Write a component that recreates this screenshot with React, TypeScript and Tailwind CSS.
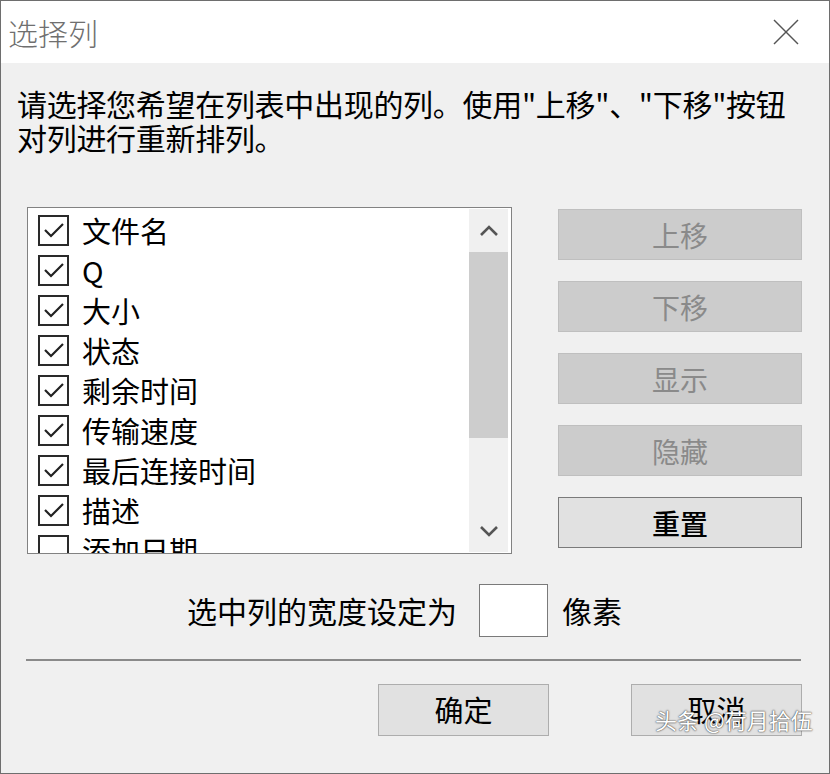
import React from 'react';

const items = [
  { label: '文件名', checked: true },
  { label: 'Q', checked: true },
  { label: '大小', checked: true },
  { label: '状态', checked: true },
  { label: '剩余时间', checked: true },
  { label: '传输速度', checked: true },
  { label: '最后连接时间', checked: true },
  { label: '描述', checked: true },
  { label: '添加日期', checked: false },
];

const sideButtons = [
  { label: '上移', disabled: true },
  { label: '下移', disabled: true },
  { label: '显示', disabled: true },
  { label: '隐藏', disabled: true },
  { label: '重置', disabled: false },
];

function CheckBox({ checked }: { checked: boolean }) {
  return (
    <div className="w-[31px] h-[31px] border-2 border-[#2a2a2a] bg-white flex items-center justify-center shrink-0">
      {checked && (
        <svg width="22" height="18" viewBox="0 0 22 18">
          <polyline points="2,9 8,15 20,3" fill="none" stroke="#222" strokeWidth="2.2" />
        </svg>
      )}
    </div>
  );
}

function Chevron({ up }: { up: boolean }) {
  return (
    <svg width="20" height="12" viewBox="0 0 20 12">
      <polyline
        points={up ? '2,10 10,2 18,10' : '2,2 10,10 18,2'}
        fill="none"
        stroke="#555"
        strokeWidth="2.6"
      />
    </svg>
  );
}

export default function App() {
  return (
    <div className="w-[830px] h-[774px] flex flex-col border border-[#6e6e6e] overflow-hidden font-['Noto_Sans_CJK_SC','Noto_Sans',sans-serif]">
      {/* title bar */}
      <div className="h-[62px] bg-white flex items-center justify-between pl-[7px] pr-[30px] shrink-0">
        <span className="text-[30px] font-light text-[#6f6f6f] leading-none">选择列</span>
        <svg width="26" height="26" viewBox="0 0 26 26">
          <line x1="1" y1="1" x2="25" y2="25" stroke="#555" strokeWidth="1.4" />
          <line x1="25" y1="1" x2="1" y2="25" stroke="#555" strokeWidth="1.4" />
        </svg>
      </div>

      <div className="flex-1 bg-[#f0f0f0] relative">
        <div className="pl-[16px] pt-[23px] text-[30px] text-black whitespace-nowrap tracking-[-0.3px]">
          <div className="h-[34px] leading-[34px]">请选择您希望在列表中出现的列。使用"上移"、"下移"按钮</div>
          <div className="h-[34px] leading-[34px]">对列进行重新排列。</div>
        </div>

        <div className="flex pl-[26px] mt-[53px]">
          {/* column list */}
          <div className="w-[485px] h-[347px] border border-[#828282] bg-white flex">
            <div className="flex-1 overflow-hidden pt-[2px] pl-[10px]">
              {items.map((it) => (
                <div key={it.label} className="h-[40px] flex items-center gap-[13px]">
                  <CheckBox checked={it.checked} />
                  <span className="text-[29px] leading-none text-black">{it.label}</span>
                </div>
              ))}
            </div>
            <div className="w-[39px] mr-[3px] my-[1px] bg-[#f0f0f0] flex flex-col">
              <div className="h-[43px] flex items-center justify-center">
                <Chevron up />
              </div>
              <div className="h-[186px] bg-[#cdcdcd]" />
              <div className="flex-1" />
              <div className="h-[43px] flex items-center justify-center">
                <Chevron up={false} />
              </div>
            </div>
          </div>

          {/* side buttons */}
          <div className="ml-[46px] w-[244px] flex flex-col gap-[21px] pt-[2px]">
            {sideButtons.map((b) =>
              b.disabled ? (
                <div
                  key={b.label}
                  className="h-[51px] bg-[#cccccc] border border-[#bfbfbf] flex items-center justify-center text-[28px] text-[#8a8a8a]"
                >
                  {b.label}
                </div>
              ) : (
                <div
                  key={b.label}
                  className="h-[51px] bg-[#e1e1e1] border border-[#7a7a7a] flex items-center justify-center text-[28px] font-medium text-black"
                >
                  {b.label}
                </div>
              )
            )}
          </div>
        </div>

        {/* width setting */}
        <div className="flex items-center mt-[30px] pl-[186px]">
          <span className="text-[30px] text-black">选中列的宽度设定为</span>
          <div className="ml-[22px] w-[69px] h-[53px] bg-white border border-[#7a7a7a]" />
          <span className="ml-[14px] text-[30px] text-black">像素</span>
        </div>

        <div className="ml-[25px] mt-[22px] w-[775px] h-[2px] bg-[#8a8a8a]" />

        <div className="flex justify-end gap-[82px] pr-[27px] mt-[23px]">
          <div className="w-[171px] h-[52px] bg-[#e1e1e1] border border-[#adadad] flex items-center justify-center text-[29px] text-black">
            确定
          </div>
          <div className="w-[171px] h-[52px] bg-[#e1e1e1] border border-[#adadad] flex items-center justify-center text-[29px] text-black">
            取消
          </div>
        </div>

        {/* watermark */}
        <span className="absolute left-[654px] top-[640px] text-[22px] text-white [text-shadow:0_0_2px_#444,0_0_1px_#444]">
          头条 @荷月拾伍
        </span>
      </div>
    </div>
  );
}
